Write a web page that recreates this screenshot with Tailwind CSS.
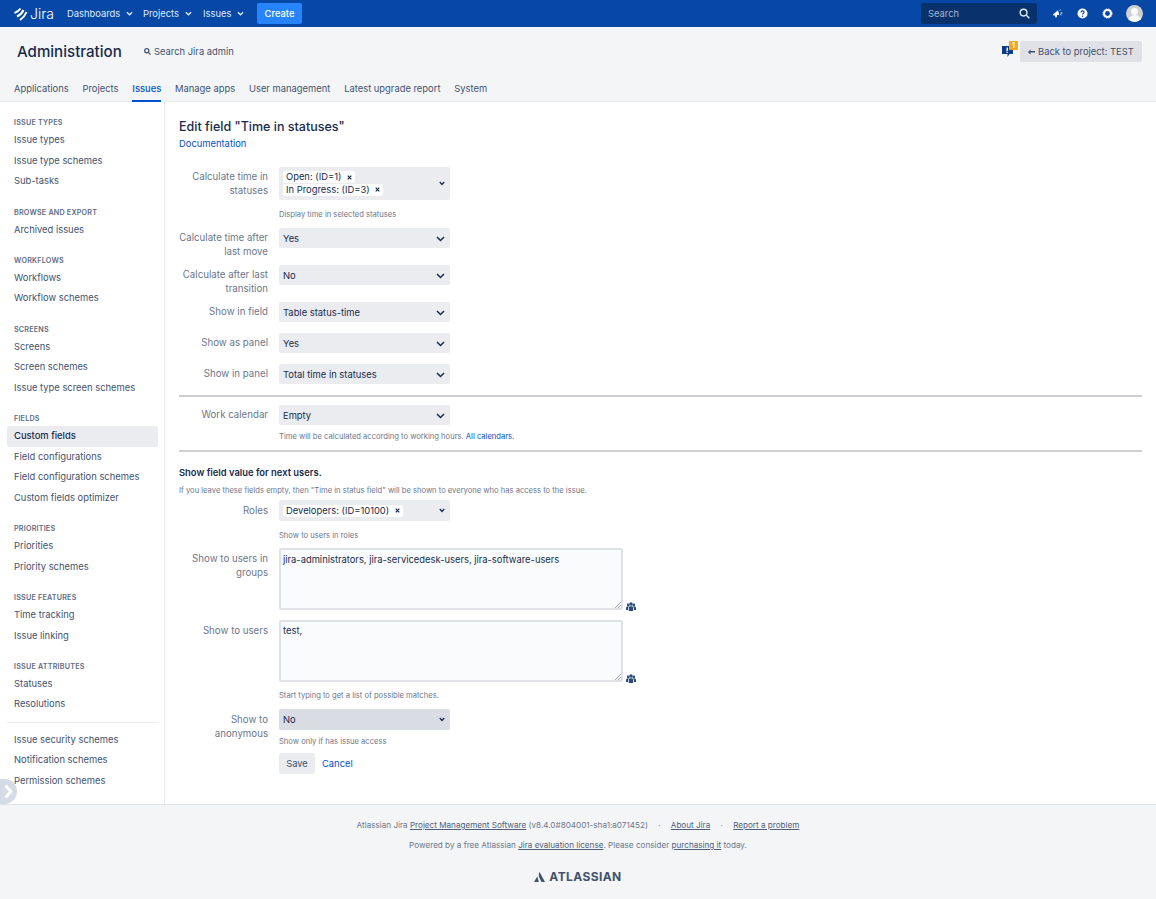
<!DOCTYPE html>
<html lang="en">
<head>
    <meta charset="UTF-8" />
    <title>Edit field - Jira</title>
    <script src="https://cdn.jsdelivr.net/npm/@tailwindcss/browser@4"></script>
</head>
<body class="bg-[#f4f5f7] font-['Inter',sans-serif] text-[9.4px] leading-[14px] text-[#172b4d] antialiased">
    <!-- Top bar -->
    <header class="h-[27px] bg-[#0747a6] flex items-center pl-[14px] pr-[13px] text-[#deebff]">
        <div class="flex items-center w-[40px] text-white">
            <svg class="w-[14px] h-[14px]" viewBox="0 0 14 14" fill="none" stroke="#fff" stroke-width="2"><path d="M.5 6Q4.500 4.500 6.500 1.500M3 9.500Q7.500 7.500 9.500 3M6 13Q10.500 10 12.500 5"/></svg>
            <span class="ml-[2px] text-[14px] font-light">Jira</span>
        </div>
        <nav class="flex items-center ml-[13px]">
            <a class="flex items-center w-[76px]">Dashboards<svg class="ml-[6px] w-[7px] h-[7px]" viewBox="0 0 8 8" fill="none" stroke="currentColor" stroke-width="1.500"><path d="M1 2.500 4 5.500 7 2.500"/></svg></a>
            <a class="flex items-center w-[60px]">Projects<svg class="ml-[6px] w-[7px] h-[7px]" viewBox="0 0 8 8" fill="none" stroke="currentColor" stroke-width="1.500"><path d="M1 2.500 4 5.500 7 2.500"/></svg></a>
            <a class="flex items-center w-[54px]">Issues<svg class="ml-[6px] w-[7px] h-[7px]" viewBox="0 0 8 8" fill="none" stroke="currentColor" stroke-width="1.500"><path d="M1 2.500 4 5.500 7 2.500"/></svg></a>
            <button class="h-[21px] w-[45px] rounded-[2px] bg-[#2684ff] text-white font-medium">Create</button>
        </nav>
        <div class="ml-auto flex items-center">
            <div class="w-[116px] h-[21px] rounded-[2px] bg-[#09326c] flex items-center justify-between px-[7px] text-[#a5b6d0]">
                <span>Search</span>
                <svg class="w-[11px] h-[11px]" viewBox="0 0 12 12" fill="none" stroke="#deebff" stroke-width="1.500"><circle cx="5" cy="5" r="3.700"/><path d="M8 8l3.300 3.300"/></svg>
            </div>
            <svg class="ml-[15px] w-[11px] h-[11px]" viewBox="0 0 12 12" fill="#fff"><path d="M1 7l5.500-4.500 1.500 5-2.500.2-.3 2.300-1.500.3-.6-2.300-1 .4zM8 2.500l1-1.200.6.5-1 1.200zM9.300 5h2v1h-2zM8.800 7.500l.5-.7 1.300.8-.5.7z"/></svg>
            <svg class="ml-[14px] w-[11px] h-[11px]" viewBox="0 0 12 12"><circle cx="6" cy="6" r="5.500" fill="#fff"/><path d="M4.300 4.800C4.400 3.700 5 3.200 6 3.200s1.700.6 1.700 1.500c0 1.300-1.700 1.200-1.700 2.500" fill="none" stroke="#0747a6" stroke-width="1.300"/><circle cx="6" cy="9" r=".8" fill="#0747a6"/></svg>
            <svg class="ml-[14px] w-[11px] h-[11px]" viewBox="0 0 12 12" fill="none" stroke="#fff" stroke-width="2.200"><circle cx="6" cy="6" r="3.800"/><circle cx="6" cy="6" r="5" stroke-width="1" stroke-dasharray="1.500 1.120"/></svg>
            <div class="ml-[13px] w-[17px] h-[17px] rounded-full bg-[#cfd0d2] overflow-hidden flex flex-col items-center">
                <div class="mt-[3px] w-[7px] h-[8px] rounded-full bg-[#fbfbfb]"></div>
                <div class="w-[14px] h-[8px] rounded-t-full bg-[#fbfbfb]"></div>
            </div>
        </div>
    </header>

    <!-- Admin header -->
    <div class="h-[74px] mt-px border-b border-[#ebecf0] pt-[13px] bg-[#f4f5f7]">
        <div class="flex items-center h-[21px] pl-[17px] pr-[14px]">
            <h1 class="w-[127px] text-[15.100px] leading-[21px] font-medium">Administration</h1>
            <a class="flex items-center text-[#42526e]">
                <svg class="w-[7px] h-[7px] mr-[3px]" viewBox="0 0 8 8" fill="none" stroke="#42526e" stroke-width="1.400"><circle cx="3.200" cy="3.200" r="2.400"/><path d="M5 5l2.500 2.500"/></svg>
                Search Jira admin
            </a>
            <div class="ml-auto flex items-center">
                <div class="relative w-[18px] h-[14px]">
                    <svg class="absolute left-0 top-0 w-[11px] h-[13px]" viewBox="0 0 11 13"><path d="M0 1h11v8H7.500l-2 3V9H0z" fill="#0b3c84"/><path d="M4.500 2.500h1.400v3.500H4.500zM4.500 6.800h1.400v1.300H4.500z" fill="#fff"/></svg>
                    <span class="absolute left-[7px] -top-[4px] w-[9px] h-[9px] rounded-[1px] bg-[#f6a623] text-white text-[7px] leading-[9px] text-center font-bold">1</span>
                </div>
                <a class="w-[122px] h-[21px] pl-[8px] rounded-[2px] bg-[#dfe1e6] text-[#42526e] flex items-center">
                    <svg class="w-[7px] h-[6px] mr-[3px]" viewBox="0 0 7 6" fill="#42526e"><path d="M0 3l2.500-2.500V2H7v1.600H2.500v1.900z"/></svg>
                    Back to project: TEST
                </a>
            </div>
        </div>
        <nav class="flex mt-[18px] pl-[14px] gap-[13.850px] text-[#42526e] h-[22px]">
            <a class="pt-[2px]">Applications</a>
            <a class="pt-[2px]">Projects</a>
            <a class="pt-[2px] text-[#0052cc] font-medium h-[22px] border-b-2 border-[#0052cc]">Issues</a>
            <a class="pt-[2px]">Manage apps</a>
            <a class="pt-[2px]">User management</a>
            <a class="pt-[2px]">Latest upgrade report</a>
            <a class="pt-[2px]">System</a>
        </nav>
    </div>

    <!-- Main -->
    <div class="flex h-[703px] bg-white border-b border-[#dfe1e6] relative">
        <aside class="w-[165px] shrink-0 border-r border-[#ebecf0] pl-[7px] pr-[6px] pt-[14.200px] text-[#42526e]">
            <h5 class="pl-[7px] text-[7.2px] leading-[14px] font-semibold tracking-[0.2px] text-[#5e6c84]">ISSUE TYPES</h5>
            <a class="block pl-[7px] h-[20.5px] leading-[20.5px] rounded-[2px]">Issue types</a>
            <a class="block pl-[7px] h-[20.5px] leading-[20.5px] rounded-[2px]">Issue type schemes</a>
            <a class="block pl-[7px] h-[20.5px] leading-[20.5px] rounded-[2px]">Sub-tasks</a>

            <h5 class="mt-[13.900px] pl-[7px] text-[7.2px] leading-[14px] font-semibold tracking-[0.2px] text-[#5e6c84]">BROWSE AND EXPORT</h5>
            <a class="block pl-[7px] h-[20.5px] leading-[20.5px] rounded-[2px]">Archived issues</a>

            <h5 class="mt-[13.900px] pl-[7px] text-[7.2px] leading-[14px] font-semibold tracking-[0.2px] text-[#5e6c84]">WORKFLOWS</h5>
            <a class="block pl-[7px] h-[20.5px] leading-[20.5px] rounded-[2px]">Workflows</a>
            <a class="block pl-[7px] h-[20.5px] leading-[20.5px] rounded-[2px]">Workflow schemes</a>

            <h5 class="mt-[13.900px] pl-[7px] text-[7.2px] leading-[14px] font-semibold tracking-[0.2px] text-[#5e6c84]">SCREENS</h5>
            <a class="block pl-[7px] h-[20.5px] leading-[20.5px] rounded-[2px]">Screens</a>
            <a class="block pl-[7px] h-[20.5px] leading-[20.5px] rounded-[2px]">Screen schemes</a>
            <a class="block pl-[7px] h-[20.5px] leading-[20.5px] rounded-[2px]">Issue type screen schemes</a>

            <h5 class="mt-[13.900px] pl-[7px] text-[7.2px] leading-[14px] font-semibold tracking-[0.2px] text-[#5e6c84]">FIELDS</h5>
            <a class="block pl-[7px] h-[20.5px] leading-[20.5px] rounded-[2px] bg-[#ebecf0] text-[#172b4d] font-medium">Custom fields</a>
            <a class="block pl-[7px] h-[20.5px] leading-[20.5px] rounded-[2px]">Field configurations</a>
            <a class="block pl-[7px] h-[20.5px] leading-[20.5px] rounded-[2px]">Field configuration schemes</a>
            <a class="block pl-[7px] h-[20.5px] leading-[20.5px] rounded-[2px]">Custom fields optimizer</a>

            <h5 class="mt-[13.900px] pl-[7px] text-[7.2px] leading-[14px] font-semibold tracking-[0.2px] text-[#5e6c84]">PRIORITIES</h5>
            <a class="block pl-[7px] h-[20.5px] leading-[20.5px] rounded-[2px]">Priorities</a>
            <a class="block pl-[7px] h-[20.5px] leading-[20.5px] rounded-[2px]">Priority schemes</a>

            <h5 class="mt-[13.900px] pl-[7px] text-[7.2px] leading-[14px] font-semibold tracking-[0.2px] text-[#5e6c84]">ISSUE FEATURES</h5>
            <a class="block pl-[7px] h-[20.5px] leading-[20.5px] rounded-[2px]">Time tracking</a>
            <a class="block pl-[7px] h-[20.5px] leading-[20.5px] rounded-[2px]">Issue linking</a>

            <h5 class="mt-[13.900px] pl-[7px] text-[7.2px] leading-[14px] font-semibold tracking-[0.2px] text-[#5e6c84]">ISSUE ATTRIBUTES</h5>
            <a class="block pl-[7px] h-[20.5px] leading-[20.5px] rounded-[2px]">Statuses</a>
            <a class="block pl-[7px] h-[20.5px] leading-[20.5px] rounded-[2px]">Resolutions</a>

            <hr class="my-[7px] border-[#ebecf0]" />
            <a class="block pl-[7px] h-[20.5px] leading-[20.5px] rounded-[2px]">Issue security schemes</a>
            <a class="block pl-[7px] h-[20.5px] leading-[20.5px] rounded-[2px]">Notification schemes</a>
            <a class="block pl-[7px] h-[20.5px] leading-[20.5px] rounded-[2px]">Permission schemes</a>
        </aside>
        <div class="absolute left-0 bottom-0 w-[17px] h-[25px] rounded-r-full bg-[#d3dbe6] flex items-center justify-center">
            <svg class="w-[9px] h-[15px]" viewBox="0 0 9 15" fill="none" stroke="#fff" stroke-width="3"><path d="M1.500 1.500 7 7.500 1.500 13.500"/></svg>
        </div>

        <main class="flex-1 pl-[14px] pr-[14px] pt-[16px]">
            <h2 class="text-[12.500px] leading-[18px] font-medium">Edit field "Time in statuses"</h2>
            <a class="block mt-[1px] text-[#0052cc]">Documentation</a>

            <!-- Row: statuses -->
            <div class="flex mt-[16px] h-[33px]">
                <label class="w-[89px] mr-[11px] pt-[3px] text-right text-[9.7px] text-[#6b778c]">Calculate time in statuses</label>
                <div class="w-[171px] rounded-[2px] bg-[#ebecf0] pl-[4px] pr-[5px] pt-[4px] flex justify-between items-start">
                    <div class="flex flex-col items-start gap-[0.500px]">
                        <span class="flex items-center h-[12px] px-[3px] bg-white rounded-[2px]">Open: (ID=1)<svg class="ml-[6px] w-[5px] h-[5px]" viewBox="0 0 5 5" stroke="#172b4d" stroke-width="1.200"><path d="M.7.700l3.600 3.600M4.300.700.7 4.300"/></svg></span>
                        <span class="flex items-center h-[12px] px-[3px] bg-white rounded-[2px]">In Progress: (ID=3)<svg class="ml-[5px] w-[5px] h-[5px]" viewBox="0 0 5 5" stroke="#172b4d" stroke-width="1.200"><path d="M.7.700l3.600 3.600M4.300.700.7 4.300"/></svg></span>
                    </div>
                    <svg class="mt-[10px] w-[6px] h-[5px]" viewBox="0 0 6 5" fill="none" stroke="#172b4d" stroke-width="1.300"><path d="M.8 1 3 3.500 5.200 1"/></svg>
                </div>
            </div>
            <p class="ml-[100px] mt-[7px] h-[14px] pt-[1px] text-[7.600px] text-[#6b778c]">Display time in selected statuses</p>

            <div class="flex mt-[7px] h-[28px]">
                <label class="w-[89px] mr-[11px] pt-[3px] text-right text-[9.7px] text-[#6b778c]">Calculate time after last move</label>
                <div class="w-[171px] h-[20px] rounded-[2px] bg-[#ebecf0] pl-[4px] pr-[5px] pt-[1px] flex justify-between items-center">Yes<svg class="w-[9px] h-[6px]" viewBox="0 0 9 6" fill="none" stroke="#172b4d" stroke-width="1.500"><path d="M1 1 4.500 4.500 8 1"/></svg></div>
            </div>
            <div class="flex mt-[9px] h-[28px]">
                <label class="w-[89px] mr-[11px] pt-[3px] text-right text-[9.7px] text-[#6b778c]">Calculate after last transition</label>
                <div class="w-[171px] h-[20px] rounded-[2px] bg-[#ebecf0] pl-[4px] pr-[5px] pt-[1px] flex justify-between items-center">No<svg class="w-[9px] h-[6px]" viewBox="0 0 9 6" fill="none" stroke="#172b4d" stroke-width="1.500"><path d="M1 1 4.500 4.500 8 1"/></svg></div>
            </div>
            <div class="flex mt-[9px] h-[20px]">
                <label class="w-[89px] mr-[11px] pt-[3px] text-right text-[9.7px] text-[#6b778c]">Show in field</label>
                <div class="w-[171px] h-[20px] rounded-[2px] bg-[#ebecf0] pl-[4px] pr-[5px] pt-[1px] flex justify-between items-center">Table status-time<svg class="w-[9px] h-[6px]" viewBox="0 0 9 6" fill="none" stroke="#172b4d" stroke-width="1.500"><path d="M1 1 4.500 4.500 8 1"/></svg></div>
            </div>
            <div class="flex mt-[11px] h-[20px]">
                <label class="w-[89px] mr-[11px] pt-[3px] text-right text-[9.7px] text-[#6b778c]">Show as panel</label>
                <div class="w-[171px] h-[20px] rounded-[2px] bg-[#ebecf0] pl-[4px] pr-[5px] pt-[1px] flex justify-between items-center">Yes<svg class="w-[9px] h-[6px]" viewBox="0 0 9 6" fill="none" stroke="#172b4d" stroke-width="1.500"><path d="M1 1 4.500 4.500 8 1"/></svg></div>
            </div>
            <div class="flex mt-[11px] h-[20px]">
                <label class="w-[89px] mr-[11px] pt-[3px] text-right text-[9.7px] text-[#6b778c]">Show in panel</label>
                <div class="w-[171px] h-[20px] rounded-[2px] bg-[#ebecf0] pl-[4px] pr-[5px] pt-[1px] flex justify-between items-center">Total time in statuses<svg class="w-[9px] h-[6px]" viewBox="0 0 9 6" fill="none" stroke="#172b4d" stroke-width="1.500"><path d="M1 1 4.500 4.500 8 1"/></svg></div>
            </div>

            <hr class="mt-[11px] border-t-2 border-[#cdcfd2]" />

            <div class="flex mt-[8px] h-[20px]">
                <label class="w-[89px] mr-[11px] pt-[3px] text-right text-[9.7px] text-[#6b778c]">Work calendar</label>
                <div class="w-[171px] h-[20px] rounded-[2px] bg-[#ebecf0] pl-[4px] pr-[5px] pt-[1px] flex justify-between items-center">Empty<svg class="w-[9px] h-[6px]" viewBox="0 0 9 6" fill="none" stroke="#172b4d" stroke-width="1.500"><path d="M1 1 4.500 4.500 8 1"/></svg></div>
            </div>
            <p class="ml-[100px] mt-[4px] h-[14px] pt-[1px] text-[7.600px] text-[#6b778c]">Time will be calculated according to working hours. <a class="text-[#0052cc]">All calendars.</a></p>

            <hr class="mt-[7px] border-t-2 border-[#cdcfd2]" />

            <h3 class="mt-[13px] h-[14px] pt-[1px] font-semibold">Show field value for next users.</h3>
            <p class="mt-[4px] h-[14px] pt-[1px] text-[7.600px] text-[#6b778c]">If you leave these fields empty, then "Time in status field" will be shown to everyone who has access to the issue.</p>

            <div class="flex mt-[3px] h-[21px]">
                <label class="w-[89px] mr-[11px] pt-[4px] text-right text-[9.7px] text-[#6b778c]">Roles</label>
                <div class="w-[171px] rounded-[2px] bg-[#ebecf0] pl-[4px] pr-[5px] flex justify-between items-center">
                    <span class="flex items-center h-[12px] px-[3px] bg-white rounded-[2px]">Developers: (ID=10100)<svg class="ml-[6px] w-[5px] h-[5px]" viewBox="0 0 5 5" stroke="#172b4d" stroke-width="1.200"><path d="M.7.700l3.600 3.600M4.300.700.7 4.300"/></svg></span>
                    <svg class="w-[6px] h-[5px]" viewBox="0 0 6 5" fill="none" stroke="#172b4d" stroke-width="1.300"><path d="M.8 1 3 3.500 5.200 1"/></svg>
                </div>
            </div>
            <p class="ml-[100px] mt-[7px] h-[14px] pt-[1px] text-[7.600px] text-[#6b778c]">Show to users in roles</p>

            <div class="flex mt-[6px] h-[62px]">
                <label class="w-[89px] mr-[11px] pt-[4px] text-right text-[9.7px] text-[#6b778c]">Show to users in groups</label>
                <div class="relative w-[344px] border-2 border-[#dfe1e6] rounded-[2px] bg-[#fafbfc] pl-[2px] pt-[3px]">jira-administrators, jira-servicedesk-users, jira-software-users
                    <svg class="absolute right-0 bottom-0 w-[6px] h-[6px]" viewBox="0 0 6 6" stroke="#7a869a" stroke-width=".7"><path d="M0 6 6 0M3 6l3-3"/></svg>
                </div>
                <svg class="self-end ml-[3px] w-[10px] h-[9px] -mb-[1px]" viewBox="0 0 10 9" fill="#2c4a73"><circle cx="2.200" cy="3" r="1.400"/><circle cx="7.800" cy="3" r="1.400"/><circle cx="5" cy="2" r="1.700"/><path d="M0 8V5.500L1 4.500h2L2 6v2zM10 8V5.500L9 4.500H7L8 6v2zM2.800 9V5.500L3.800 4.300h2.400l1 1.200V9z"/></svg>
            </div>

            <div class="flex mt-[10px] h-[62px]">
                <label class="w-[89px] mr-[11px] pt-[4px] text-right text-[9.7px] text-[#6b778c]">Show to users</label>
                <div class="relative w-[344px] border-2 border-[#dfe1e6] rounded-[2px] bg-[#fafbfc] pl-[2px] pt-[2px]">test,
                    <svg class="absolute right-0 bottom-0 w-[6px] h-[6px]" viewBox="0 0 6 6" stroke="#7a869a" stroke-width=".7"><path d="M0 6 6 0M3 6l3-3"/></svg>
                </div>
                <svg class="self-end ml-[3px] w-[10px] h-[9px] -mb-[1px]" viewBox="0 0 10 9" fill="#2c4a73"><circle cx="2.200" cy="3" r="1.400"/><circle cx="7.800" cy="3" r="1.400"/><circle cx="5" cy="2" r="1.700"/><path d="M0 8V5.500L1 4.500h2L2 6v2zM10 8V5.500L9 4.500H7L8 6v2zM2.800 9V5.500L3.800 4.300h2.400l1 1.200V9z"/></svg>
            </div>
            <p class="ml-[100px] mt-[6px] h-[14px] pt-[1px] text-[7.600px] text-[#6b778c]">Start typing to get a list of possible matches.</p>

            <div class="flex mt-[7px] h-[21px]">
                <label class="w-[89px] mr-[11px] pt-[4px] text-right text-[9.7px] text-[#6b778c]">Show to anonymous</label>
                <div class="w-[171px] rounded-[2px] bg-[#dadce3] pl-[4px] pr-[5px] flex justify-between items-center">No<svg class="w-[6px] h-[5px]" viewBox="0 0 6 5" fill="none" stroke="#172b4d" stroke-width="1.300"><path d="M.8 1 3 3.500 5.200 1"/></svg></div>
            </div>
            <p class="ml-[100px] mt-[4px] h-[14px] pt-[1px] text-[7.600px] text-[#6b778c]">Show only if has issue access</p>

            <div class="flex items-center ml-[100px] mt-[5px]">
                <button class="w-[36px] h-[21px] rounded-[2px] bg-[#ebecf0] text-[#42526e]">Save</button>
                <a class="ml-[7px] text-[#0052cc]">Cancel</a>
            </div>
        </main>
    </div>

    <!-- Footer -->
    <footer class="h-[94px] pt-[13px] text-center text-[8.150px] text-[#6b778c]">
        <p class="h-[14px]">Atlassian Jira <a class="underline text-[#505f79]">Project Management Software</a> (v8.4.0#804001-sha1:a071452) <span class="mx-[8px]">·</span> <a class="underline text-[#505f79]">About Jira</a> <span class="mx-[8px]">·</span> <a class="underline text-[#505f79]">Report a problem</a></p>
        <p class="mt-[6px] h-[14px]">Powered by a free Atlassian <a class="underline text-[#505f79]">Jira evaluation license</a>. Please consider <a class="underline text-[#505f79]">purchasing it</a> today.</p>
        <div class="mt-[18px] flex items-center justify-center text-[#42526e]">
            <svg class="w-[11px] h-[10px] mr-[4px]" viewBox="0 0 11 10" fill="#42526e"><path d="M5.500 0C4.400 2 4.600 4 5.500 6L7.500 10H11zM3.300 4.500 0 10h4.800L4 7z"/></svg>
            <span class="text-[12px] leading-[14px] font-bold tracking-[0.4px]">ATLASSIAN</span>
        </div>
    </footer>
</body>
</html>
